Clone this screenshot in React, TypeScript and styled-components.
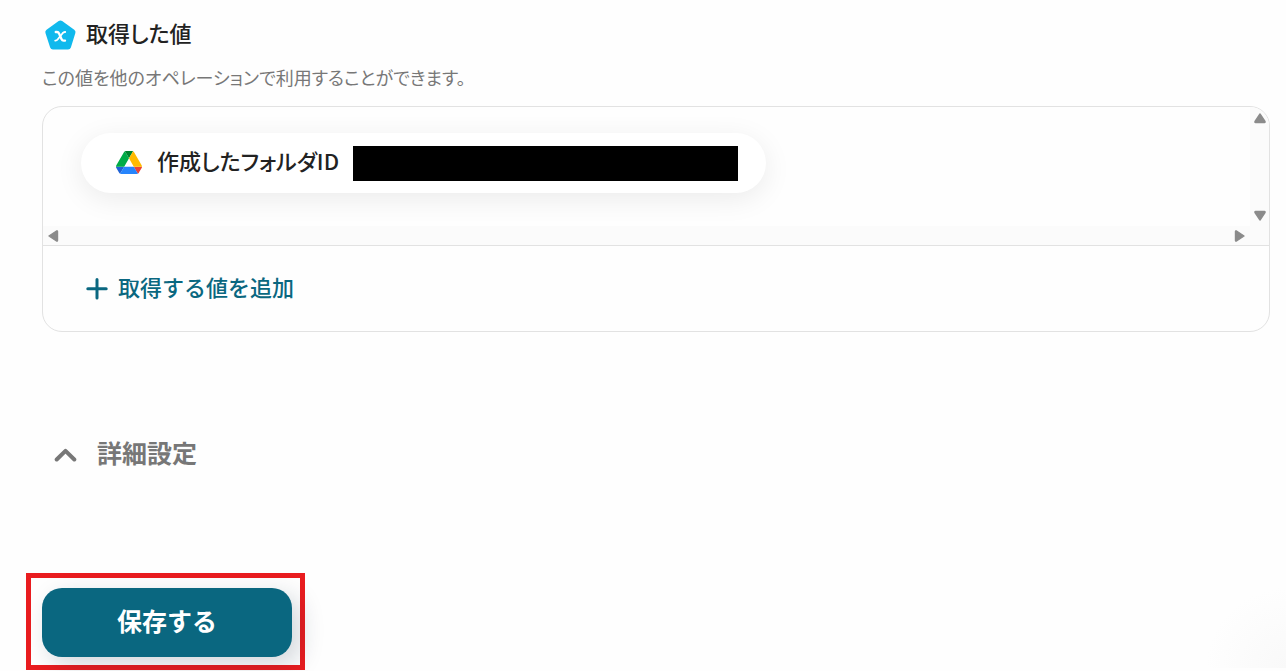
import React from "react";
import styled, { createGlobalStyle } from "styled-components";

const GlobalStyle = createGlobalStyle`
  *, *::before, *::after { box-sizing: border-box; }
  body {
    margin: 0;
    background: #fefefe;
    color: #222;
    font-family: "Noto Sans CJK JP", sans-serif;
  }
  button { font-family: inherit; }
`;

const Page = styled.main`
  position: relative;
  overflow: hidden;
  padding: 16px 16px 1px 42px;
`;

const CornerGlow = styled.div`
  position: absolute;
  right: 0;
  bottom: 3px;
  width: 80px;
  height: 110px;
  background: radial-gradient(circle at 100% 100%, #f9f9f9, #fefefe 80px);
  z-index: -1;
`;

const Label = styled.span<{ $proportional?: boolean }>`
  padding-bottom: 6px;
  white-space: nowrap;
  font-feature-settings: ${(p) => (p.$proportional ? '"palt"' : "normal")};
`;

const Heading = styled.h2`
  display: flex;
  align-items: center;
  gap: 9px;
  height: 38px;
  margin: 0;
  padding-left: 2px;
  font-size: 22px;
  line-height: 32px;
  font-weight: 500;
`;

const HeadingIcon = styled.svg`
  flex: none;
  width: 33px;
  height: 32px;
`;

const Description = styled.p`
  margin: 11px 0 17px;
  font-size: 18px;
  line-height: 24px;
  color: #777;
  font-feature-settings: "palt";
`;

const Card = styled.section`
  border: 1px solid #e2e2e2;
  border-radius: 20px;
  overflow: hidden;
`;

const ScrollPane = styled.div`
  display: grid;
  grid-template-columns: 1fr 19px;
  grid-template-rows: 119px 19px;
  border-bottom: 1px solid #e2e2e2;
`;

const Viewport = styled.div`
  padding: 26px 38px;
  overflow: hidden;
`;

const VerticalBar = styled.div`
  display: flex;
  flex-direction: column;
  justify-content: space-between;
  align-items: center;
  padding: 4px 0 3px;
  background: #fbfbfb;
`;

const HorizontalBar = styled.div`
  grid-column: 1 / -1;
  display: flex;
  justify-content: space-between;
  align-items: center;
  padding: 0 22px 0 3px;
  background: #fbfbfb;
`;

const ArrowButton = styled.button`
  display: flex;
  padding: 0;
  border: 0;
  background: none;
  svg { width: 14px; height: 14px; }
`;

const ValuePill = styled.div`
  display: inline-flex;
  align-items: center;
  height: 60px;
  padding: 0 28px 0 35px;
  border-radius: 30px;
  background: #fff;
  box-shadow: 0 6px 28px rgba(0, 0, 0, 0.08);
`;

const DriveIcon = styled.svg`
  width: 26px;
  height: 23px;
  margin: 0 15px 2px 0;
`;

const ValueName = styled(Label)`
  margin-right: 14px;
  font-size: 22px;
  line-height: 32px;
  font-weight: 500;
`;

const Redaction = styled.span`
  width: 385px;
  height: 35px;
  background: #000;
`;

const AddButton = styled.button`
  display: flex;
  align-items: center;
  gap: 10px;
  width: 100%;
  height: 85px;
  padding: 0 43px;
  border: 0;
  background: none;
  color: #0a6780;
  font-size: 22px;
  line-height: 32px;
  font-weight: 500;
`;

const PlusIcon = styled.svg`
  width: 22px;
  height: 22px;
`;

const DetailsToggle = styled.button`
  display: flex;
  align-items: center;
  gap: 20px;
  height: 38px;
  margin-top: 104px;
  padding: 0 12px;
  border: 0;
  background: none;
  color: #777;
  font-size: 25px;
  line-height: 32px;
  font-weight: 700;
`;

const ChevronIcon = styled.svg`
  width: 23px;
  height: 16px;
`;

const Highlight = styled.div`
  width: fit-content;
  margin: 99px 0 0 -16px;
  padding: 10px 8px 8px 11px;
  border: 5px solid #e91c1f;
`;

const SaveButton = styled.button`
  display: flex;
  align-items: center;
  justify-content: center;
  min-width: 250px;
  height: 69px;
  border: 0;
  border-radius: 20px;
  background: #0a6780;
  color: #fff;
  font-size: 25px;
  line-height: 32px;
  font-weight: 700;
  box-shadow: 8px 8px 24px rgba(10, 40, 60, 0.18);
`;

const arrowRotation = { up: 0, right: 90, down: 180, left: 270 };

function ScrollArrow({ direction, label }: { direction: keyof typeof arrowRotation; label: string }) {
  return (
    <ArrowButton type="button" aria-label={label}>
      <svg viewBox="0 0 14 14">
        <path
          d="M7 3 L12 10.5 Q12.4 11.5 11.5 11.5 H2.5 Q1.6 11.5 2 10.5 Z"
          fill="#8b8b8b"
          stroke="#8b8b8b"
          strokeWidth="1.4"
          strokeLinejoin="round"
          transform={`rotate(${arrowRotation[direction]} 7 7)`}
        />
      </svg>
    </ArrowButton>
  );
}

export default function App() {
  return (
    <>
      <GlobalStyle />
      <Page>
        <CornerGlow />
        <Heading>
          <HeadingIcon viewBox="0 1 33 32" aria-hidden="true">
            <path
              d="M16.4 5.5 L28.5 14.1 L24 28.5 H9 L4.3 14.1 Z"
              fill="#10b9ed"
              stroke="#10b9ed"
              strokeWidth="6"
              strokeLinejoin="round"
            />
            <path
              d="M11.8 14 H13 Q14.4 14 15 15.4 L17.6 21.2 Q18.2 22.6 19.6 22.6 H21"
              fill="none"
              stroke="#fff"
              strokeWidth="2.4"
              strokeLinecap="round"
            />
            <path
              d="M21.2 14 Q19.8 13.8 18.6 15.2 L13.8 21.2 Q12.6 22.8 11.2 22.6"
              fill="none"
              stroke="#fff"
              strokeWidth="1.8"
              strokeLinecap="round"
            />
          </HeadingIcon>
          <Label $proportional>取得した値</Label>
        </Heading>
        <Description>この値を他のオペレーションで利用することができます。</Description>

        <Card>
          <ScrollPane>
            <Viewport>
              <ValuePill>
                <DriveIcon viewBox="0 0 87.3 78" preserveAspectRatio="none" aria-hidden="true">
                  <path d="m6.6 66.85 3.85 6.65c.8 1.4 1.95 2.5 3.3 3.3l13.75-23.8h-27.5c0 1.55.4 3.1 1.2 4.5z" fill="#1f62d6" />
                  <path d="m43.65 25-13.75-23.8c-1.35.8-2.5 1.9-3.3 3.3l-25.4 44a9.06 9.06 0 0 0-1.2 4.5h27.5z" fill="#00ac47" />
                  <path d="m73.55 76.8c1.35-.8 2.5-1.9 3.3-3.3l1.6-2.75 7.65-13.25c.8-1.4 1.2-2.95 1.2-4.5h-27.5l5.85 11.5z" fill="#ea4335" />
                  <path d="m43.65 25 13.75-23.8c-1.35-.8-2.9-1.2-4.5-1.2h-18.5c-1.6 0-3.15.45-4.5 1.2z" fill="#00832d" />
                  <path d="m59.8 53h-32.3l-13.75 23.8c1.35.8 2.9 1.2 4.5 1.2h50.8c1.6 0 3.15-.45 4.5-1.2z" fill="#2684fc" />
                  <path d="m73.4 26.5-12.7-22c-.8-1.4-1.95-2.5-3.3-3.3l-13.75 23.8 16.15 28h27.45c0-1.55-.4-3.1-1.2-4.5z" fill="#ffba00" />
                </DriveIcon>
                <ValueName $proportional>作成したフォルダID</ValueName>
                <Redaction />
              </ValuePill>
            </Viewport>
            <VerticalBar>
              <ScrollArrow direction="up" label="上へスクロール" />
              <ScrollArrow direction="down" label="下へスクロール" />
            </VerticalBar>
            <HorizontalBar>
              <ScrollArrow direction="left" label="左へスクロール" />
              <ScrollArrow direction="right" label="右へスクロール" />
            </HorizontalBar>
          </ScrollPane>
          <AddButton type="button">
            <PlusIcon viewBox="0 0 22 22" aria-hidden="true">
              <path d="M11 1.6V20M1.8 10.8H20.2" stroke="currentColor" strokeWidth="3" strokeLinecap="round" />
            </PlusIcon>
            <Label>取得する値を追加</Label>
          </AddButton>
        </Card>

        <DetailsToggle type="button">
          <ChevronIcon viewBox="0 0 23 16" aria-hidden="true">
            <path
              d="M2.7 12.5 L11.5 3.9 L20.3 12.5"
              fill="none"
              stroke="currentColor"
              strokeWidth="4"
              strokeLinecap="round"
              strokeLinejoin="round"
            />
          </ChevronIcon>
          <Label>詳細設定</Label>
        </DetailsToggle>

        <Highlight>
          <SaveButton type="button">
            <Label>保存する</Label>
          </SaveButton>
        </Highlight>
      </Page>
    </>
  );
}
